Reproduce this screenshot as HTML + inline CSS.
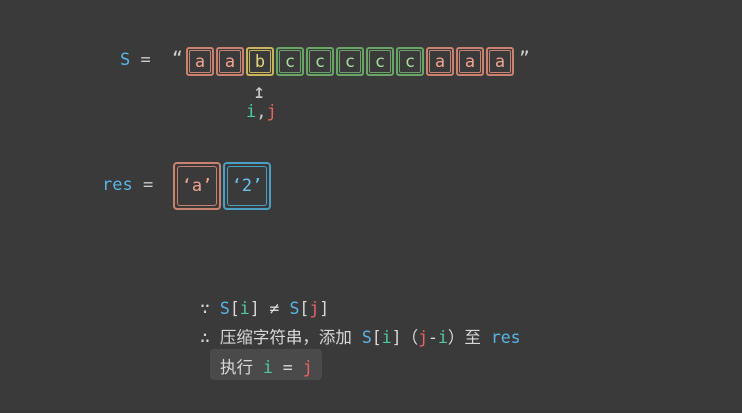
<!DOCTYPE html><html><head><style>
body{margin:0;width:742px;height:413px;background:#3a3a3a;font-family:"DejaVu Sans Mono","Liberation Mono","Noto Sans CJK SC",monospace;color:#d8d8d8;position:relative;overflow:hidden}
.a{position:absolute;white-space:nowrap}
.b{position:absolute;top:47px;width:24px;height:25px;border:2px solid;border-radius:3px;box-sizing:content-box}
.b i{position:absolute;left:1px;top:1px;right:1px;bottom:1px;border:1px solid;border-radius:2px;font-style:normal;text-align:center;line-height:22px;font-size:17px}
.r{border-color:#c98270}.r i{border-color:#c98270;color:#f0a48e}
.y{border-color:#c8b45a}.y i{border-color:#c8b45a;color:#e4d47a}
.g{border-color:#6aa468}.g i{border-color:#6aa468;color:#a8dca0}
.bl{color:#5ab4e6}.t{color:#4fcaa0}.j{color:#e86464}
.rb{position:absolute;top:162px;width:44px;height:44px;border:2px solid;border-radius:4px}
.rb i{position:absolute;left:2px;top:2px;right:2px;bottom:2px;border:1.5px solid;border-radius:3px;font-style:normal;text-align:center;line-height:38px;font-size:17px}
.cjk{font-family:"Noto Sans CJK SC","DejaVu Sans",sans-serif}
</style></head><body>
<div class="a bl" style="left:120px;top:50px;font-size:17px">S <span style="color:#ccc">=</span></div>
<div class="a" style="left:172px;top:48px;font-size:18px;color:#ccc">“</div>
<div class="a" style="left:519px;top:48px;font-size:18px;color:#ccc">”</div>
<div class="b r" style="left:186px"><i>a</i></div>
<div class="b r" style="left:216px"><i>a</i></div>
<div class="b y" style="left:246px"><i>b</i></div>
<div class="b g" style="left:276px"><i>c</i></div>
<div class="b g" style="left:306px"><i>c</i></div>
<div class="b g" style="left:336px"><i>c</i></div>
<div class="b g" style="left:366px"><i>c</i></div>
<div class="b g" style="left:396px"><i>c</i></div>
<div class="b r" style="left:426px"><i>a</i></div>
<div class="b r" style="left:456px"><i>a</i></div>
<div class="b r" style="left:486px"><i>a</i></div>
<div class="a" style="left:253px;top:79px;font-size:20px;color:#ccc">↥</div>
<div class="a" style="left:246px;top:102px;font-size:17px"><span class="t">i</span><span style="color:#ccc">,</span><span class="j">j</span></div>
<div class="a bl" style="left:102px;top:175px;font-size:17px">res <span style="color:#ccc">=</span></div>
<div class="rb" style="left:173px;border-color:#c98270"><i style="border-color:#c98270;color:#f0a48e">‘a’</i></div>
<div class="rb" style="left:223px;border-color:#4aa0c0"><i style="border-color:#4aa0c0;color:#6ac4e8">‘2’</i></div>
<div class="a" style="left:200px;top:299px;font-size:16.5px">∵ <span class="bl">S</span>[<span class="t">i</span>] ≠ <span class="bl">S</span>[<span class="j">j</span>]</div>
<div class="a" style="left:200px;top:324px;font-size:16.5px">∴ <span class="cjk">压缩字符串，添加</span> <span class="bl">S</span>[<span class="t">i</span>]<span class="cjk">（</span><span class="j">j</span>-<span class="t">i</span><span class="cjk">）至</span> <span class="bl">res</span></div>
<div class="a" style="left:210px;top:349px;width:112px;height:31px;background:#4a4a4a;border-radius:4px"></div>
<div class="a" style="left:220px;top:354px;font-size:16.5px"><span class="cjk">执行</span> <span class="t">i</span> = <span class="j">j</span></div>
</body></html>
